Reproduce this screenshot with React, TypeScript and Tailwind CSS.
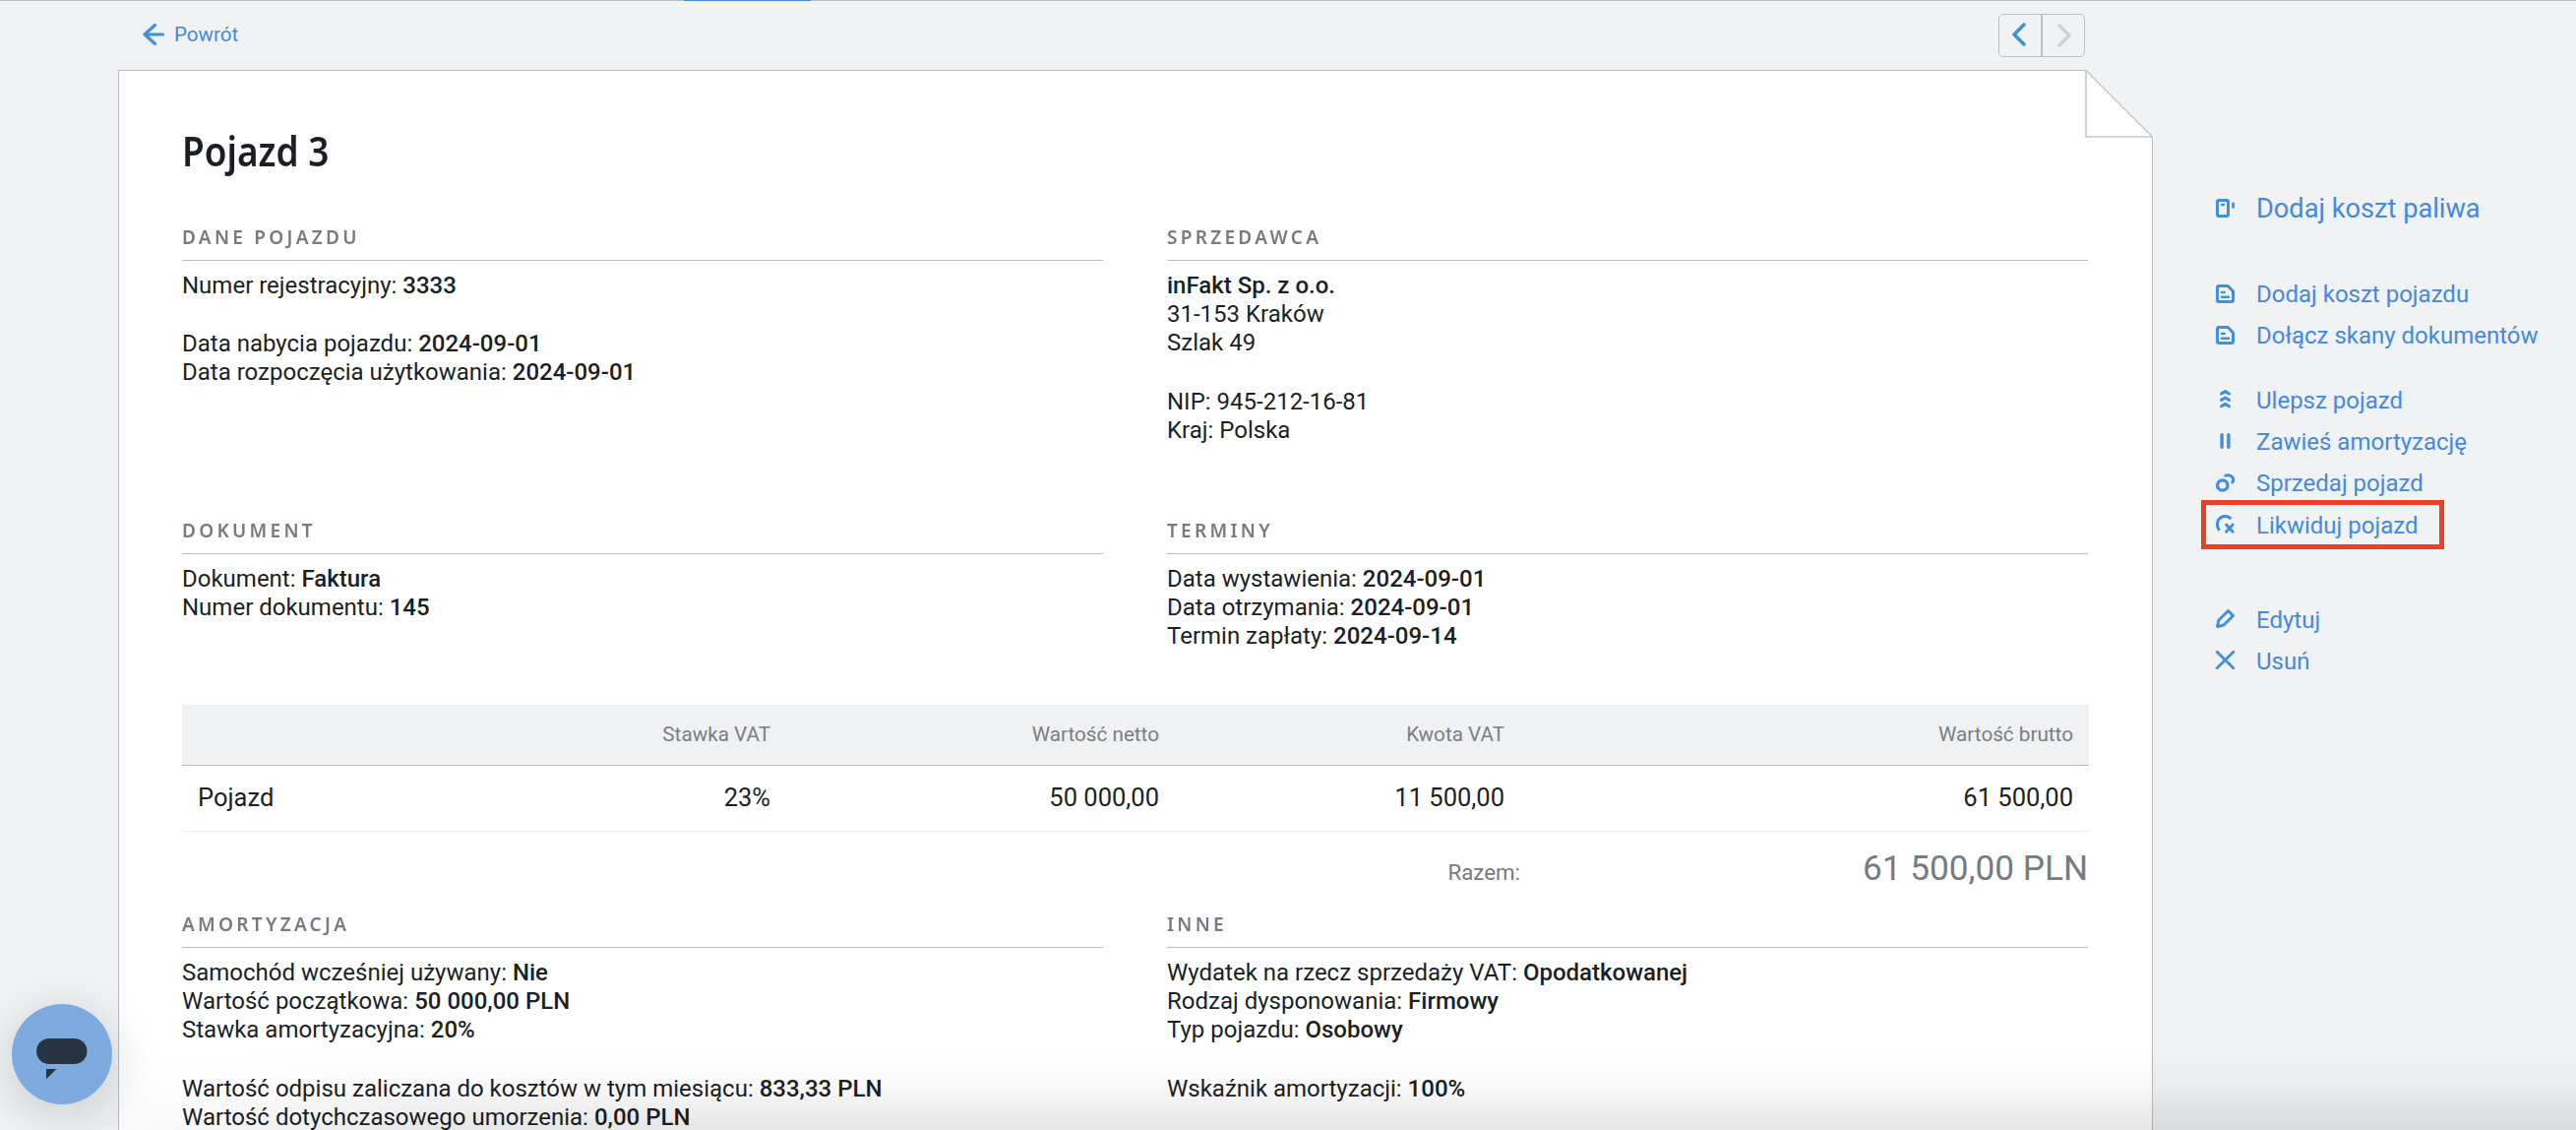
import React from 'react';

type Line = { label?: string; value?: string; gap?: boolean };

const icons = {
  fuel: (
    <>
      <rect x="1.5" y="1.5" width="11" height="16" rx="1.5" strokeWidth="3" />
      <path d="M6 6h2" strokeWidth="2.4" />
      <path d="M17.6 5v3.4" strokeWidth="2.8" />
    </>
  ),
  document: (
    <>
      <path d="M3 1.5h9.2L17.5 7v9q0 1.5-1.5 1.5H3q-1.5 0-1.5-1.5V3q0-1.5 1.5-1.5z" strokeWidth="3" />
      <path d="M6 8h2.6M6 12.7h7" strokeWidth="2.6" />
    </>
  ),
  upgrade: <path d="M5.5 4l4-2.4 4 2.4M5.5 10.4l4-2.4 4 2.4M5.5 16.8l4-2.4 4 2.4" strokeWidth="3" />,
  pause: <path d="M6.1 2.8v12.4M12.9 2.8v12.4" strokeWidth="3.4" />,
  sell: (
    <>
      <circle cx="6.8" cy="12" r="5.2" strokeWidth="3.3" />
      <path d="M9.8 2.1C13.5.7 17.8 3 17.7 6.4c0 1-.3 1.9-.9 2.6" strokeWidth="3" />
    </>
  ),
  scrap: (
    <>
      <path d="M3.8 15.8C-.5 11.2 1.2 3.4 7.4 1.8c3.2-.8 6 .2 8 2.3" strokeWidth="3" strokeLinecap="butt" />
      <path d="M10.5 10l6.7 7.2M17.2 10l-6.7 7.2" strokeWidth="3" />
    </>
  ),
  edit: <path d="M1.5 17.5l1.3-6.3L12.5 1.5l5 5L8 16z" strokeWidth="2.9" />,
  remove: <path d="M1.2 1.2l16.6 16.6M17.8 1.2L1.2 17.8" strokeWidth="2.8" />,
};

const Icon = ({ name }: { name: keyof typeof icons }) => (
  <svg
    viewBox="0 0 19 19"
    className="w-[19px] h-[19px] shrink-0 overflow-visible -mt-[2px]"
    fill="none"
    stroke="#4090da"
    strokeLinecap="round"
    strokeLinejoin="round"
  >
    {icons[name]}
  </svg>
);

const Action = ({ icon, text }: { icon: keyof typeof icons; text: string }) => (
  <a className="flex items-center gap-[22px] h-[42.3px] text-[24px] whitespace-nowrap">
    <Icon name={icon} />
    {text}
  </a>
);

const Section = ({ title, lines }: { title: string; lines: Line[] }) => (
  <section className="w-[936px]">
    <h2 className="h-[37px] border-b border-[#b9bcc2] font-['Noto_Sans'] font-semibold text-[20.5px] leading-[24px] tracking-[3.5px] text-[#777b81]">
      <span className="inline-block origin-left scale-x-[0.93]">{title}</span>
    </h2>
    <div className="pt-[11px] text-[24px] leading-[29.2px]">
      {lines.map((line, index) => (
        <p key={index} className={line.gap ? 'mt-[30px]' : ''}>
          {line.label} {line.value && <b className="font-medium">{line.value}</b>}
        </p>
      ))}
    </div>
  </section>
);

const App = () => {
  return (
    <div className="relative w-[2618px] h-[1148px] overflow-hidden bg-[#f0f2f4] font-[Roboto,sans-serif] text-[#1b1f24]">
      <div className="h-px bg-[#bbbdc2] pl-[695px]">
        <div className="w-[129px] h-px bg-[#4489e0]" />
      </div>

      <div className="flex">
        <main className="ml-[120px] w-[2068px]">
          <div className="flex justify-between h-[70px] pl-[25px] pr-[69px] pt-[13px]">
            <a className="flex items-center gap-[10px] h-[42px] text-[20.6px] text-[#4489e0]">
              <svg viewBox="0 0 22 22" className="w-[22px] h-[22px] -mt-px" fill="none" stroke="#4090da" strokeWidth="3.2" strokeLinecap="round" strokeLinejoin="round">
                <path d="M20.5 11H2M12.5 1.5L2 11l10.5 9.5" />
              </svg>
              Powrót
            </a>
            <div className="flex w-[88px] h-[44px] rounded-[5px] border border-[#bbbec4]">
              <div className="flex w-[44px] items-center justify-center border-r-2 border-[#bbbec4]">
                <svg viewBox="0 0 14 24" className="w-[14px] h-[24px] mb-[2px] mr-[3px]" fill="none" stroke="#4090da" strokeWidth="3.6" strokeLinecap="round" strokeLinejoin="round">
                  <path d="M12 2L2 12l10 10" />
                </svg>
              </div>
              <div className="flex w-[42px] items-center justify-center">
                <svg viewBox="0 0 14 24" className="w-[14px] h-[24px] ml-[2px]" fill="none" stroke="#ccd3d9" strokeWidth="3.6" strokeLinecap="round" strokeLinejoin="round">
                  <path d="M2 2l10 10L2 22" />
                </svg>
              </div>
            </div>
          </div>

          <article className="relative h-[1100px] bg-white border border-[#b9bcc2] px-[64px] pt-[52px]">
            {/* folded page corner */}
            <svg viewBox="0 0 69 69" className="absolute -top-px -right-px w-[69px] h-[69px]">
              <path d="M0 0h69v69z" fill="#f0f2f4" />
              <path d="M1 .5v67.5h67.5z" fill="#fff" stroke="#c3cad1" strokeWidth="1.5" />
            </svg>

            <h1 className="h-[110px] font-['Noto_Sans'] font-semibold text-[42px] leading-[57px]">
              <span className="inline-block origin-left scale-x-[0.88]">Pojazd 3</span>
            </h1>

            <div className="flex gap-[65px] h-[298px] -mt-[6px]">
              <Section
                title="DANE POJAZDU"
                lines={[
                  { label: 'Numer rejestracyjny:', value: '3333' },
                  { label: 'Data nabycia pojazdu:', value: '2024-09-01', gap: true },
                  { label: 'Data rozpoczęcia użytkowania:', value: '2024-09-01' },
                ]}
              />
              <Section
                title="SPRZEDAWCA"
                lines={[
                  { value: 'inFakt Sp. z o.o.' },
                  { label: '31-153 Kraków' },
                  { label: 'Szlak 49' },
                  { label: 'NIP: 945-212-16-81', gap: true },
                  { label: 'Kraj: Polska' },
                ]}
              />
            </div>

            <div className="flex gap-[65px] h-[190px]">
              <Section
                title="DOKUMENT"
                lines={[
                  { label: 'Dokument:', value: 'Faktura' },
                  { label: 'Numer dokumentu:', value: '145' },
                ]}
              />
              <Section
                title="TERMINY"
                lines={[
                  { label: 'Data wystawienia:', value: '2024-09-01' },
                  { label: 'Data otrzymania:', value: '2024-09-01' },
                  { label: 'Termin zapłaty:', value: '2024-09-14' },
                ]}
              />
            </div>

            <table className="w-[1938px] table-fixed border-separate border-spacing-0 text-right">
              <thead>
                <tr className="h-[62px] bg-[#f0f1f3] text-[20.7px] text-[#7b7e83] *:border-b *:border-[#b9bcc2]">
                  <th className="w-[214px]" />
                  <th className="w-[401px] pr-[17px] font-normal">Stawka VAT</th>
                  <th className="w-[394px] pr-[16px] font-normal">Wartość netto</th>
                  <th className="w-[351px] pr-[16px] font-normal">Kwota VAT</th>
                  <th className="pr-[16px] font-normal">Wartość brutto</th>
                </tr>
              </thead>
              <tbody>
                <tr className="h-[67px] text-[25.5px] *:border-b *:border-[#f0f1f3] *:pb-[2px]">
                  <td className="pl-[16px] text-left">Pojazd</td>
                  <td className="pr-[17px]">23%</td>
                  <td className="pr-[16px]">50 000,00</td>
                  <td className="pr-[16px]">11 500,00</td>
                  <td className="pr-[16px]">61 500,00</td>
                </tr>
              </tbody>
            </table>

            <div className="flex items-baseline h-[81px] pt-[11px] text-[#777b80]">
              <span className="w-[1360px] text-right text-[22.3px]">Razem:</span>
              <span className="w-[577px] text-right text-[35.2px]">61 500,00 PLN</span>
            </div>

            <div className="flex gap-[65px]">
              <Section
                title="AMORTYZACJA"
                lines={[
                  { label: 'Samochód wcześniej używany:', value: 'Nie' },
                  { label: 'Wartość początkowa:', value: '50 000,00 PLN' },
                  { label: 'Stawka amortyzacyjna:', value: '20%' },
                  { label: 'Wartość odpisu zaliczana do kosztów w tym miesiącu:', value: '833,33 PLN', gap: true },
                  { label: 'Wartość dotychczasowego umorzenia:', value: '0,00 PLN' },
                ]}
              />
              <Section
                title="INNE"
                lines={[
                  { label: 'Wydatek na rzecz sprzedaży VAT:', value: 'Opodatkowanej' },
                  { label: 'Rodzaj dysponowania:', value: 'Firmowy' },
                  { label: 'Typ pojazdu:', value: 'Osobowy' },
                  { label: 'Wskaźnik amortyzacji:', value: '100%', gap: true },
                ]}
              />
            </div>
          </article>
        </main>

        <aside className="ml-[64px] pt-[190px] text-[#4489e0]">
          <a className="flex items-center gap-[22px] h-[42px] text-[27.2px] whitespace-nowrap">
            <Icon name="fuel" />
            Dodaj koszt paliwa
          </a>
          <div className="mt-[45px]">
            <Action icon="document" text="Dodaj koszt pojazdu" />
            <Action icon="document" text="Dołącz skany dokumentów" />
          </div>
          <div className="mt-[23px]">
            <Action icon="upgrade" text="Ulepsz pojazd" />
            <Action icon="pause" text="Zawieś amortyzację" />
            <Action icon="sell" text="Sprzedaj pojazd" />
            <div className="-ml-[15px] w-[247px] h-[50px] -mt-[4px] pl-[10px] border-[5px] border-[#ec4025]">
              <div className="-mt-px">
                <Action icon="scrap" text="Likwiduj pojazd" />
              </div>
            </div>
          </div>
          <div className="mt-[50px]">
            <Action icon="edit" text="Edytuj" />
            <Action icon="remove" text="Usuń" />
          </div>
        </aside>
      </div>

      {/* shade along the bottom edge */}
      <div className="absolute left-[60px] right-0 bottom-0 h-[84px] bg-linear-to-b from-transparent via-black/3 to-black/10 mask-l-from-85% mask-l-to-100%" />
      <button className="absolute left-[12px] top-[1020px] w-[102px] h-[102px] rounded-full bg-[#7faadf] shadow-[0_10px_50px_rgba(0,30,20,0.18)]">
        <svg viewBox="0 0 102 102" className="w-[102px] h-[102px]" fill="#273542">
          <rect x="25" y="35" width="51.5" height="26" rx="13" />
          <path d="M35 66h10.5L35 76.3z" />
        </svg>
      </button>
    </div>
  );
};

export default App;
